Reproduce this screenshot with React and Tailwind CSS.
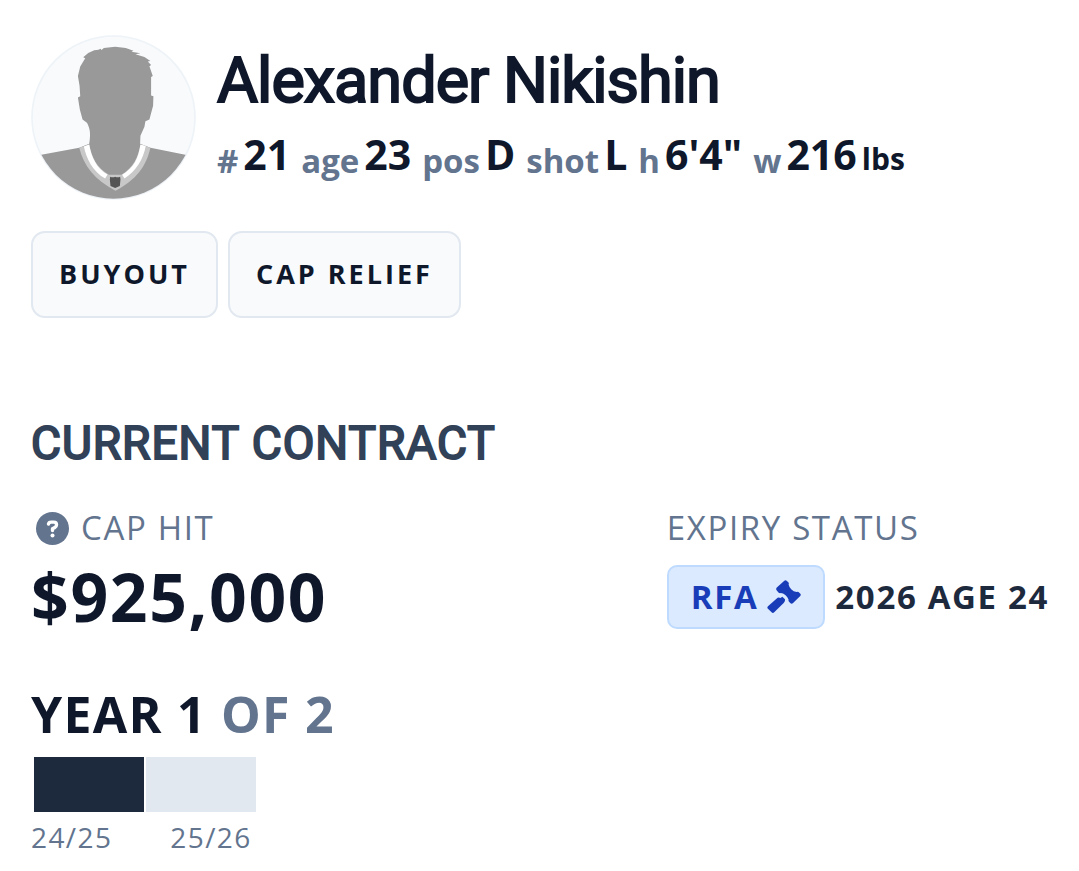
const stats = [
  { label: "#", value: "21" },
  { label: "age", value: "23" },
  { label: "pos", value: "D" },
  { label: "shot", value: "L" },
  { label: "h", value: "6'4\"" },
  { label: "w", value: "216", unit: "lbs" },
];

const seasons = [
  { label: "24/25", color: "bg-slate-800" },
  { label: "25/26", color: "bg-slate-200" },
];

function Avatar() {
  return (
    <svg viewBox="33 27 496 496" className="size-[165px] shrink-0" role="img" aria-label="Player photo">
      <defs>
        <clipPath id="avatar-clip">
          <circle cx="281" cy="275" r="244" />
        </clipPath>
      </defs>
      <circle cx="281" cy="275" r="245" fill="#f8fafc" stroke="#eef3f8" strokeWidth="5" />
      <g clipPath="url(#avatar-clip)">
        <path
          fill="#999999"
          d="M30 394 L68 386 L178 366 L208 354 C211 335 211 320 209 312 C207 303 204 296 201 291 L188 281 L180 252 L174 215 L181 211 L179 180 L174 150 L181 122 L196 97 L190 94 L205 81 L223 73 L236 71 L242 68 L245 72 L252 66 L286 62 L318 66 L341 74 L335 77 L362 82 L347 85 L374 93 L392 105 L384 107 L394 117 L389 121 L399 150 L394 153 L394 209 L401 211 L400 240 L389 281 L377 286 L374 303 L362 330 L361 354 L392 366 L493 386 L530 394 L530 540 L30 540 Z"
        />
        <path
          fill="#c8c8c8"
          d="M178 366 L208 356 C216 396 232 427 267 447 L305 447 C340 425 355 396 362 356 L392 366 C380 420 350 463 287 495 C225 463 191 420 178 366 Z"
        />
        <path
          fill="#ffffff"
          d="M192 362 L208 356 C214 392 230 429 263 446 L256 458 C219 438 199 398 192 362 Z M362 356 L378 361 C371 400 348 438 314 458 L307 447 C342 427 356 396 362 356 Z"
        />
        <path
          fill="#555555"
          d="M271 453 Q279 456 286 453 Q293 456 301 453 L302 461 L300 481 L286 487 L272 481 L270 461 Z"
        />
      </g>
    </svg>
  );
}

function QuestionIcon() {
  return (
    <svg viewBox="12 12 98 98" className="size-[33px]" aria-hidden="true">
      <circle cx="61" cy="61" r="49" fill="currentColor" />
      <path
        d="M49 48 Q50 42 57 42 H65 Q73 42 73 50 Q73 55 68 58 L61 62 V67"
        fill="none"
        stroke="#ffffff"
        strokeWidth="10"
        strokeLinecap="round"
        strokeLinejoin="round"
      />
      <circle cx="61" cy="82" r="6" fill="#ffffff" />
    </svg>
  );
}

function GavelIcon() {
  return (
    <svg viewBox="21 19 104 104" className="size-[34px]" fill="currentColor" aria-hidden="true">
      <path d="M51 42 L74 21 Q78 18 82 22 L86 26 Q89 29 87 33 Q89 42 95 47 Q102 54 112 56 Q116 54 119 57 L123 61 Q126 65 122 69 L100 90 Q96 93 92 89 L88 85 Q86 82 87 79 Q85 72 77 65 Q70 59 63 59 Q59 60 56 57 L51 51 Q47 46 51 42 Z" />
      <path d="M68 70 L76 78 Q77 84 72 89 L43 118 Q39 122 35 118 L24 107 Q20 103 24 99 L50 76 Q56 70 62 74 Z" />
    </svg>
  );
}

function Stat({ label, value, unit }) {
  return (
    <div className="flex items-end gap-[5px]">
      <dt className="text-[33px] leading-[34px] text-slate-500">{label}</dt>
      <dd className="text-[41px] leading-[48px] text-slate-900">
        {value}
        {unit && <span className="ml-[5px] text-[30px] leading-none">{unit}</span>}
      </dd>
    </div>
  );
}

function ActionButton({ children }) {
  return (
    <button
      type="button"
      className="h-[87px] rounded-[14px] border-2 border-slate-200 bg-slate-50 px-[26px] text-[27px] font-bold tracking-[3px] text-slate-900"
    >
      {children}
    </button>
  );
}

export default function App() {
  return (
    <main className="bg-white pt-[35px] pr-[30px] pb-4 pl-[31px] font-['Open_Sans','Noto_Sans',sans-serif]">
      <header className="flex items-start gap-[21px]">
        <Avatar />
        <div className="pt-[10px]">
          <h1 className="font-['Roboto',sans-serif] text-[63px] leading-[72px] font-normal tracking-[-1px] text-slate-900 [-webkit-text-stroke:2px]">
            Alexander Nikishin
          </h1>
          <dl className="mt-[13px] flex flex-wrap gap-x-[11px] font-bold">
            {stats.map((stat) => (
              <Stat key={stat.label} {...stat} />
            ))}
          </dl>
        </div>
      </header>

      <div className="mt-[31px] flex gap-[10px]">
        <ActionButton>BUYOUT</ActionButton>
        <ActionButton>CAP RELIEF</ActionButton>
      </div>

      <section className="mt-[97px]">
        <h2 className="font-['Roboto',sans-serif] text-[46px] leading-[56px] font-normal tracking-[1px] text-slate-700 [-webkit-text-stroke:2px]">
          CURRENT CONTRACT
        </h2>

        <div className="mt-[33px] flex justify-between">
          <div>
            <div className="flex items-center gap-[12px] pl-[5px] text-[33px] leading-[48px] tracking-wider text-slate-500">
              <QuestionIcon />
              <span>CAP HIT</span>
            </div>
            <p className="text-[66px] leading-[88px] font-bold tracking-wide text-slate-900">$925,000</p>
          </div>

          <div>
            <p className="text-[33px] leading-[48px] tracking-wider text-slate-500">EXPIRY STATUS</p>
            <div className="mt-[13px] flex items-center gap-[10px] text-[33px] leading-[46px] font-bold tracking-wider">
              <span className="flex h-16 items-center gap-[9px] rounded-[10px] border-2 border-blue-200 bg-blue-100 px-[22px] text-blue-800">
                RFA
                <GavelIcon />
              </span>
              <span className="text-slate-800">2026 AGE 24</span>
            </div>
          </div>
        </div>

        <h3 className="mt-[40px] text-[50px] leading-[68px] font-bold tracking-wide text-slate-900">
          YEAR 1 <span className="text-slate-500">OF 2</span>
        </h3>
        <div className="mt-[9px] flex gap-[2px] pl-[3px]" aria-hidden="true">
          {seasons.map((season) => (
            <div key={season.label} className={`h-[55px] w-[110px] ${season.color}`} />
          ))}
        </div>
        <ul className="mt-[5px] flex gap-[58px] text-[28px] leading-[40px] tracking-wider text-slate-500">
          {seasons.map((season) => (
            <li key={season.label}>{season.label}</li>
          ))}
        </ul>
      </section>
    </main>
  );
}
